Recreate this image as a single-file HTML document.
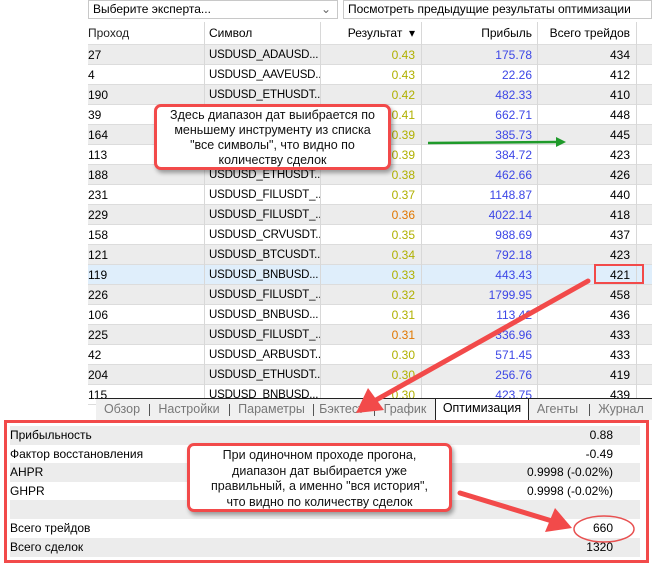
<!DOCTYPE html>
<html><head><meta charset="utf-8"><style>
*{margin:0;padding:0;box-sizing:border-box}
body{width:652px;height:566px;background:#fff;position:relative;overflow:hidden;font-family:"Liberation Sans","DejaVu Sans",sans-serif;font-size:12px;color:#000}
.a{position:absolute}
.dd{top:0;height:19px;border:1px solid #c8c8c8;background:#fff;font-size:12px;line-height:17px;padding-left:4px;white-space:nowrap;overflow:hidden}
.row{position:absolute;left:88px;width:564px;height:20px;border-bottom:1px solid #dcdcdc}
.c{position:absolute;top:0;height:20px;line-height:20px;white-space:nowrap;overflow:hidden;border-right:1px solid #d8d8d8}
.c1{left:0;width:117px;padding-left:0}
.c2{left:117px;width:116px;padding-left:4px;font-size:11.5px;letter-spacing:-0.2px}
.c3{left:233px;width:101px;text-align:right;padding-right:6px;color:#b0b000}
.c4{left:334px;width:116px;text-align:right;padding-right:5px;color:#3c46e6}
.c5{left:450px;width:99px;text-align:right;padding-right:6px}
.g{background:#ececec}
.tab{position:absolute;top:400px;height:19px;line-height:19px;color:#777;font-size:12.5px;text-align:center}
.sep{position:absolute;top:404px;width:1px;height:12px;background:#555}
.br{position:absolute;left:10px;width:630px;height:19px;line-height:19px;font-size:12px}
.br span{position:absolute;right:27px}
.call{position:absolute;background:#fff;border:3px solid #f24a4a;border-radius:7px;box-shadow:2px 3px 4px rgba(0,0,0,.35);text-align:center;font-size:12.5px;line-height:15px;color:#111}
</style></head><body>
<div class="a dd" style="left:88px;width:250px">Выберите эксперта...<span style="position:absolute;right:6px;color:#666">⌄</span></div>
<div class="a dd" style="left:343px;width:309px">Посмотреть предыдущие результаты оптимизации</div>
<div class="row" style="top:22px;height:23px;border-bottom:1px solid #ddd">
<div class="c c1" style="height:23px;line-height:22px;color:#222">Проход</div>
<div class="c c2" style="height:23px;line-height:22px;font-size:12px;letter-spacing:0">Символ</div>
<div class="c c3" style="height:23px;line-height:22px;color:#000">Результат &nbsp;▾</div>
<div class="c c4" style="height:23px;line-height:22px;color:#000">Прибыль</div>
<div class="c c5" style="height:23px;line-height:22px">Всего трейдов</div>
</div>
<div id="rows"></div>
<script>
var d=[["27","USDUSD_ADAUSD...","0.43","175.78","434"],["4","USDUSD_AAVEUSD...","0.43","22.26","412"],["190","USDUSD_ETHUSDT...","0.42","482.33","410"],["39","USDUSD_ETHUSDT...","0.41","662.71","448"],["164","USDUSD_ETHUSDT...","0.39","385.73","445"],["113","USDUSD_ETHUSDT...","0.39","384.72","423"],["188","USDUSD_ETHUSDT...","0.38","462.66","426"],["231","USDUSD_FILUSDT_...","0.37","1148.87","440"],["229","USDUSD_FILUSDT_...","0.36","4022.14","418"],["158","USDUSD_CRVUSDT...","0.35","988.69","437"],["121","USDUSD_BTCUSDT...","0.34","792.18","423"],["119","USDUSD_BNBUSD...","0.33","443.43","421"],["226","USDUSD_FILUSDT_...","0.32","1799.95","458"],["106","USDUSD_BNBUSD...","0.31","113.42","436"],["225","USDUSD_FILUSDT_...","0.31","336.96","433"],["42","USDUSD_ARBUSDT...","0.30","571.45","433"],["204","USDUSD_ETHUSDT...","0.30","256.76","419"],["115","USDUSD_BNBUSD...","0.30","423.75","439"]];
var h="";d.forEach(function(r,i){var bg=i==11?"background:#dfeefb":(i%2==0?"background:#ececec":"");var oc=(i==8||i==14)?"color:#e07800":"";
h+='<div class="row" style="top:'+(45+i*20)+'px;'+bg+'"><div class="c c1">'+r[0]+'</div><div class="c c2">'+r[1]+'</div><div class="c c3" style="'+oc+'">'+r[2]+'</div><div class="c c4">'+r[3]+'</div><div class="c c5">'+r[4]+'</div></div>';});
document.getElementById("rows").innerHTML=h;
</script>
<div class="a" style="left:96px;top:398px;width:556px;height:22px;background:#f0f0f0;border-top:1px solid #222"></div>
<div class="tab" style="left:96px;width:52px">Обзор</div><div class="sep" style="left:149px"></div>
<div class="tab" style="left:150px;width:78px">Настройки</div><div class="sep" style="left:229px"></div>
<div class="tab" style="left:230px;width:83px">Параметры</div><div class="sep" style="left:313px"></div>
<div class="tab" style="left:314px;width:55px">Бэктест</div><div class="sep" style="left:374px"></div>
<div class="tab" style="left:375px;width:60px">График</div>
<div class="tab" style="left:435px;top:398px;height:22px;width:94px;background:#fff;border:1px solid #222;border-bottom:none;color:#000">Оптимизация</div>
<div class="tab" style="left:530px;width:55px">Агенты</div><div class="sep" style="left:589px"></div>
<div class="tab" style="left:590px;width:62px">Журнал</div>
<div class="a" style="left:4px;top:420px;width:645px;height:143px;border:3px solid #f24a4a"></div>
<div class="br" style="top:426px;background:#ececec">Прибыльность<span>0.88</span></div>
<div class="br" style="top:445px">Фактор восстановления<span>-0.49</span></div>
<div class="br" style="top:463px;background:#ececec">AHPR<span>0.9998 (-0.02%)</span></div>
<div class="br" style="top:482px">GHPR<span>0.9998 (-0.02%)</span></div>
<div class="br" style="top:500px;background:#ececec"></div>
<div class="br" style="top:519px">Всего трейдов<span>660</span></div>
<div class="br" style="top:538px;background:#ececec">Всего сделок<span>1320</span></div>
<div class="call" style="left:154px;top:104px;width:237px;height:66px;padding-top:1px">Здесь диапазон дат выибрается по<br>меньшему инструменту из списка<br>"все символы", что видно по<br>количеству сделок</div>
<div class="call" style="left:187px;top:443px;width:265px;height:69px;padding-top:2px;line-height:15.5px">При одиночном проходе прогона,<br>диапазон дат выбирается уже<br>правильный, а именно "вся история",<br>что видно по количеству сделок</div>
<div class="a" style="left:594px;top:264px;width:50px;height:20px;border:2px solid #f24a4a"></div>
<svg class="a" style="left:0;top:0" width="652" height="566">
<line x1="428" y1="143" x2="556" y2="142" stroke="#1f9a2a" stroke-width="2.5"/>
<polygon points="556,137 566,142 556,147" fill="#1f9a2a"/>
<line x1="588" y1="281" x2="376" y2="400" stroke="#f24a4a" stroke-width="5" stroke-linecap="round"/>
<polygon points="356,413 368,388 384,410" fill="#f24a4a"/>
<line x1="460" y1="493" x2="552" y2="521" stroke="#f24a4a" stroke-width="5" stroke-linecap="round"/>
<polygon points="572,528 545,532 555,508" fill="#f24a4a"/>
<ellipse cx="604" cy="529" rx="30" ry="13" fill="none" stroke="#e85050" stroke-width="1.5"/>
</svg>
</body></html>
